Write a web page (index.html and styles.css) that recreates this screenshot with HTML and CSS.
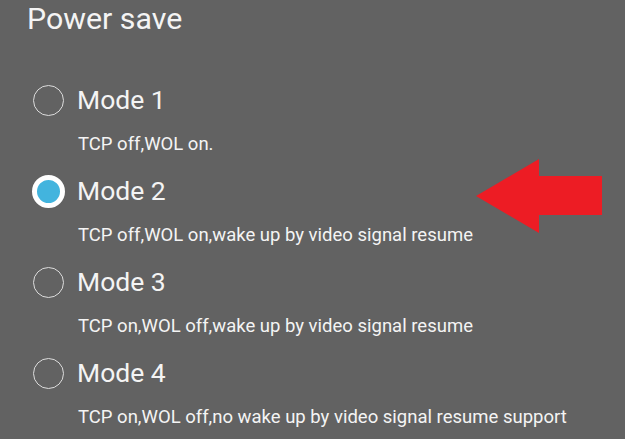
FILE: index.html
```html
<!DOCTYPE html>
<html>
<head>
<meta charset="utf-8">
<link rel="stylesheet" href="styles.css">
</head>
<body>
<div class="screen">
  <h1 class="title">Power save</h1>
  <ul class="modes">
    <li class="mode">
      <div class="mode-head"><span class="radio"></span><span class="label">Mode 1</span></div>
      <div class="desc">TCP off,WOL on.</div>
    </li>
    <li class="mode">
      <div class="mode-head"><span class="radio checked"></span><span class="label">Mode 2</span></div>
      <div class="desc">TCP off,WOL on,wake up by video signal resume</div>
      <svg class="arrow" width="130" height="80" viewBox="0 0 130 80"><polygon points="0,37 63,0 63,17 126,17 126,56 63,56 63,74" fill="#ed1c24"/></svg>
    </li>
    <li class="mode">
      <div class="mode-head"><span class="radio"></span><span class="label">Mode 3</span></div>
      <div class="desc">TCP on,WOL off,wake up by video signal resume</div>
    </li>
    <li class="mode">
      <div class="mode-head"><span class="radio"></span><span class="label">Mode 4</span></div>
      <div class="desc">TCP on,WOL off,no wake up by video signal resume support</div>
    </li>
  </ul>
</div>
</body>
</html>
```
FILE: styles.css
```css
html, body { margin: 0; padding: 0; }
body { background: #626262; font-family: Roboto, "Noto Sans", sans-serif; color: #f4f4f4; }
.screen { width: 625px; height: 439px; overflow: hidden; position: relative; }
.title { margin: 0; padding: 0 0 0 27px; font-weight: 400; font-size: 30.3px; line-height: 37px; }
.modes { list-style: none; margin: 0; padding: 48px 0 0 33px; display: flex; flex-direction: column; gap: 0; }
.mode { position: relative; height: 91px; flex: none; }
.mode-head { display: flex; align-items: center; height: 30px; }
.radio { width: 31px; height: 31px; border: 1.5px solid #dcdcdc; border-radius: 50%; box-sizing: border-box; flex: none; }
.radio.checked { border: 5.5px solid #ffffff; background: #42b4de; width: 33px; height: 33px; margin-left: -1px; margin-right: -1px; }
.label { margin-left: 13px; font-size: 26.5px; line-height: 30px; }
.desc { margin: 18px 0 0 45px; font-size: 18.5px; line-height: 22px; white-space: nowrap; }
.arrow { position: absolute; left: 443px; top: -17px; }
```
